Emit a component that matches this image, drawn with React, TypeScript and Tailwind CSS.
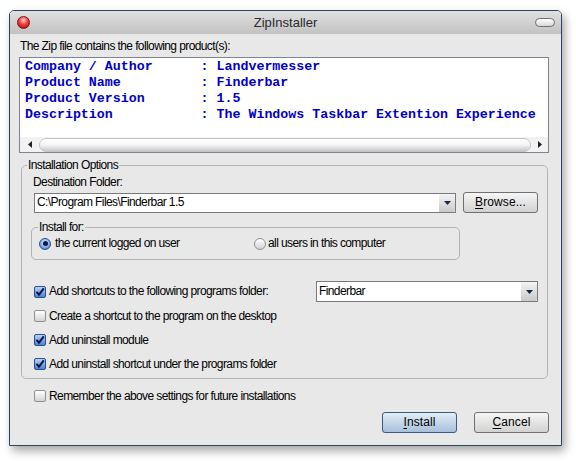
import React from 'react';

function CheckBox({ checked }: { checked?: boolean }) {
  if (checked) {
    return (
      <span className="flex h-[12px] w-[12px] shrink-0 items-center justify-center rounded-[2px] border border-[#2b4f8c] bg-gradient-to-b from-[#b9d3f7] to-[#4a7fd6]">
        <svg width="10" height="10" viewBox="0 0 10 10">
          <path d="M1.5 4.8 L4 7.6 L8.8 1.4" fill="none" stroke="#0b1640" strokeWidth="2" />
        </svg>
      </span>
    );
  }
  return (
    <span className="h-[12px] w-[12px] shrink-0 rounded-[2px] border border-[#8e8f8f] bg-gradient-to-b from-[#ffffff] to-[#d4d4d4]" />
  );
}

function Radio({ checked }: { checked?: boolean }) {
  if (checked) {
    return (
      <span className="flex h-[12px] w-[12px] shrink-0 items-center justify-center rounded-full border border-[#2b4f8c] bg-[radial-gradient(circle_at_50%_35%,#e4f0ff_0%,#7fa8e8_60%,#2f5fb8_100%)]">
        <span className="h-[5px] w-[5px] rounded-full bg-[#0b1a4a]" />
      </span>
    );
  }
  return (
    <span className="h-[12px] w-[12px] shrink-0 rounded-full border border-[#8e8f8f] bg-gradient-to-b from-[#ffffff] to-[#d4d4d4]" />
  );
}

function DropArrow() {
  return (
    <span className="flex h-full w-[16px] shrink-0 items-center justify-center rounded-r-[2px] bg-gradient-to-b from-[#f4f4f4] to-[#c9c9c9]">
      <svg width="7" height="4" viewBox="0 0 7 4">
        <path d="M0 0 H7 L3.5 4 Z" fill="#15284a" />
      </svg>
    </span>
  );
}

function Button({ label, primary }: { label: string; primary?: boolean }) {
  return (
    <button
      className={
        primary
          ? 'flex h-[21px] w-[75px] items-center justify-center rounded-[3px] border border-[#3d5a7c] bg-gradient-to-b from-[#e3edf7] to-[#a8c0da] tracking-[0.1px] text-black'
          : 'flex h-[21px] w-[75px] items-center justify-center rounded-[3px] border border-[#707070] bg-gradient-to-b from-[#f6f6f6] to-[#d2d2d2] tracking-[0.1px] text-black'
      }
    >
      <span className="underline underline-offset-2">{label[0]}</span>
      {label.slice(1)}
    </button>
  );
}

const productLines = [
  'Company / Author      : Landvermesser',
  'Product Name          : Finderbar',
  'Product Version       : 1.5',
  'Description           : The Windows Taskbar Extention Experience',
];

export default function App() {
  return (
    <div className="h-[461px] w-[576px] bg-white pl-[9px] pt-[10px] font-['Liberation_Sans',Arial,sans-serif] text-[12px] leading-[15px] tracking-[-0.6px] text-black">
      <div className="flex h-[436px] w-[553px] flex-col overflow-hidden rounded-t-[5px] border border-[#2c4460] shadow-[3px_5px_10px_rgba(0,0,0,0.35)]">
        {/* title bar */}
        <div className="grid h-[23px] shrink-0 grid-cols-[1fr_auto_1fr] items-center bg-gradient-to-b from-[#e0e0e0] to-[#c2c2c2]">
          <div className="pl-[7px]">
            <span className="block h-[13px] w-[13px] rounded-full border border-[#8a1010] bg-[radial-gradient(circle_at_50%_30%,#ffd0d0_0%,#f04040_45%,#a00000_100%)]" />
          </div>
          <span className="text-[13px] tracking-normal text-[#2a2a2a]">ZipInstaller</span>
          <div className="flex justify-end pr-[6px]">
            <span className="block h-[9px] w-[20px] rounded-full border border-[#6f6f6f] bg-gradient-to-b from-[#ffffff] to-[#d8d8d8]" />
          </div>
        </div>

        {/* body */}
        <div className="flex flex-1 flex-col bg-[#e8e8e8] pl-[9px] pt-[5px]">
          <p className="ml-[1px]">The Zip file contains the following product(s):</p>

          <div className="mt-[3px] flex h-[96px] w-[530px] flex-col border border-[#7f8590] bg-white">
            <div className="flex-1 pl-[5px] pt-[1px] font-['Liberation_Mono',monospace] text-[13.3px] font-bold leading-[16px] tracking-normal whitespace-pre text-[#0000cc]">
              {productLines.map((line) => (
                <div key={line}>{line}</div>
              ))}
            </div>
            <div className="flex h-[15px] items-center bg-[#f2f2f2]">
              <span className="flex h-full w-[19px] items-center justify-center">
                <svg width="4" height="7" viewBox="0 0 4 7">
                  <path d="M4 0 V7 L0 3.5 Z" fill="#222" />
                </svg>
              </span>
              <span className="h-[14px] flex-1 rounded-full border border-[#c4c4c4] bg-gradient-to-b from-[#ffffff] via-[#f4f4f4] to-[#c8c8c8]" />
              <span className="flex h-full w-[17px] items-center justify-center">
                <svg width="4" height="7" viewBox="0 0 4 7">
                  <path d="M0 0 V7 L4 3.5 Z" fill="#222" />
                </svg>
              </span>
            </div>
          </div>

          <fieldset className="ml-[2px] mt-[5px] w-[527px] rounded-[5px] border border-[#b4b4b4] p-0 pb-[6px]">
            <legend className="ml-[5px] px-[1px]">Installation Options</legend>
            <div className="pl-[12px] pr-[9px]">
              <p className="-ml-px mt-[2px]">Destination Folder:</p>
              <div className="mt-[2px] flex items-center gap-[7px]">
                <div className="flex h-[20px] w-[422px] items-center border border-[#7a7a7a] bg-white">
                  <span className="flex-1 pl-[2px]">C:\Program Files\Finderbar 1.5</span>
                  <DropArrow />
                </div>
                <Button label="Browse..." />
              </div>

              <fieldset className="-ml-[3px] mt-[7px] w-[429px] rounded-[5px] border border-[#b4b4b4] p-0 pb-[8px] pl-[7px]">
                <legend className="-ml-[1px] px-[1px]">Install for:</legend>
                <div className="mt-[1px] flex items-center">
                  <label className="flex w-[215px] items-center gap-[4px]">
                    <Radio checked />
                    <span>the current logged on user</span>
                  </label>
                  <label className="flex items-center gap-[2px]">
                    <Radio />
                    <span>all users in this computer</span>
                  </label>
                </div>
              </fieldset>

              <div className="mt-[21px] flex h-[21px] items-center">
                <label className="flex items-center gap-[3px]">
                  <CheckBox checked />
                  <span>Add shortcuts to the following programs folder:</span>
                </label>
                <div className="ml-auto flex h-[21px] w-[222px] items-center border border-[#7a7a7a] bg-white">
                  <span className="flex-1 pl-[2px]">Finderbar</span>
                  <DropArrow />
                </div>
              </div>
              <div className="mt-[6px] flex flex-col gap-[8px]">
                <label className="flex h-[16px] items-center gap-[3px]">
                  <CheckBox />
                  <span>Create a shortcut to the program on the desktop</span>
                </label>
                <label className="flex h-[16px] items-center gap-[3px]">
                  <CheckBox checked />
                  <span>Add uninstall module</span>
                </label>
                <label className="flex h-[16px] items-center gap-[3px]">
                  <CheckBox checked />
                  <span>Add uninstall shortcut under the programs folder</span>
                </label>
              </div>
            </div>
          </fieldset>

          <label className="ml-[15px] mt-[9px] flex h-[16px] items-center gap-[3px]">
            <CheckBox />
            <span>Remember the above settings for future installations</span>
          </label>

          <div className="mt-[8px] flex w-[530px] justify-end gap-[17px]">
            <Button label="Install" primary />
            <Button label="Cancel" />
          </div>
        </div>
      </div>
    </div>
  );
}
